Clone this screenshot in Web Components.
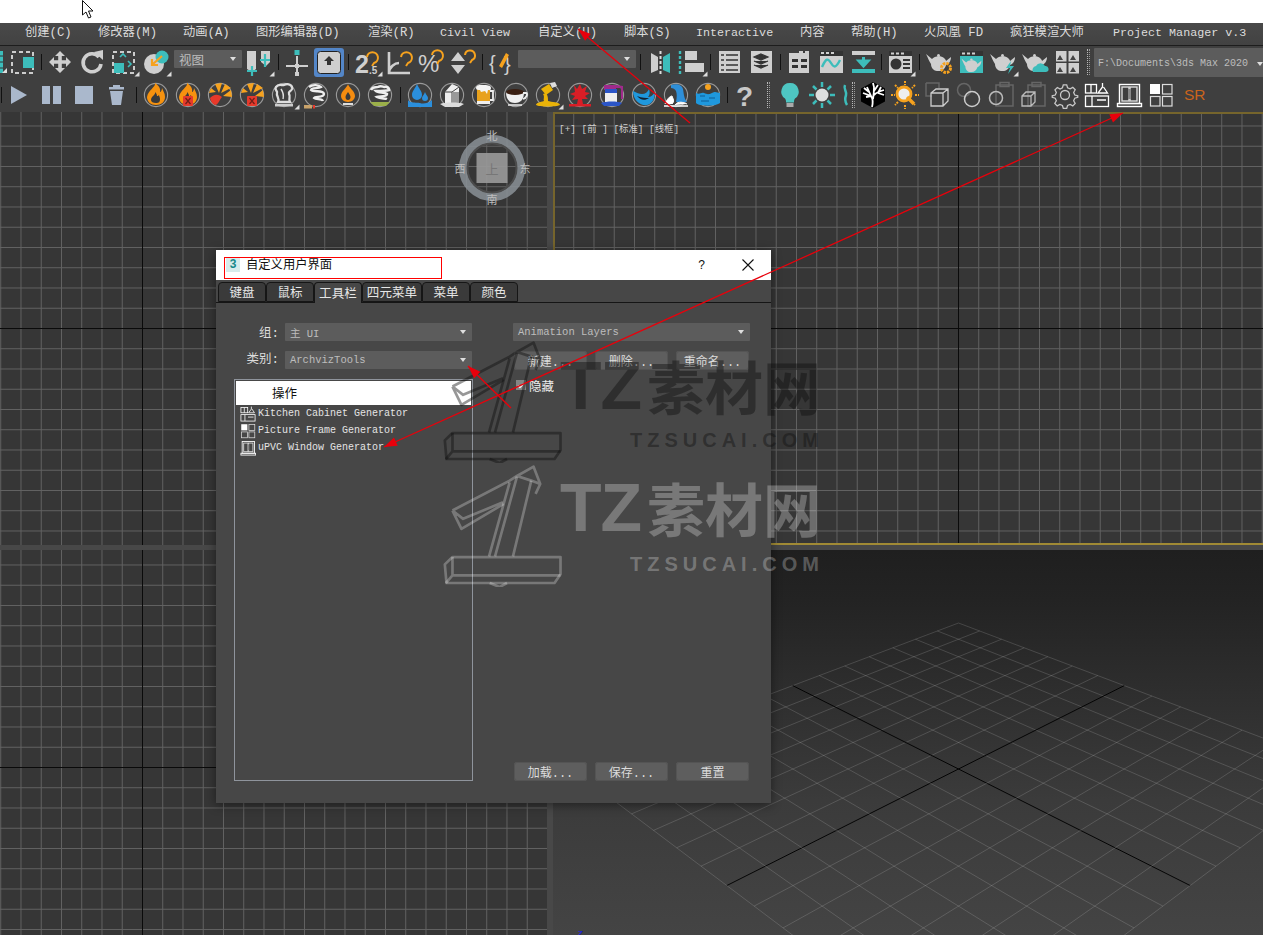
<!DOCTYPE html>
<html lang="zh"><head><meta charset="utf-8"><title>3ds Max</title>
<style>
html,body{margin:0;padding:0;width:1263px;height:935px;overflow:hidden;background:#444}
body{font-family:"Liberation Mono","Noto Sans CJK SC",monospace;color:#ddd}
</style></head><body>
<max-app>
  <title-strip></title-strip>
  <menu-bar></menu-bar>
  <tool-row>
    <tool-icon name="selcut" w="7"></tool-icon>
    <tool-icon name="sel"></tool-icon><tool-sep w="5"></tool-sep>
    <tool-icon name="move"></tool-icon><tool-icon name="rotate"></tool-icon><tool-icon name="scale" fly></tool-icon><tool-icon name="place" fly></tool-icon>
    <tool-sep w="2" blank></tool-sep><combo-box text="视图" w="68" h="18" fs="12.500" style="margin-top:4px"></combo-box><tool-sep w="1" blank></tool-sep>
    <tool-icon name="pivot" fly></tool-icon><tool-sep w="6"></tool-sep>
    <tool-icon name="axis"></tool-icon><tool-icon name="active"></tool-icon><tool-sep w="6"></tool-sep>
    <tool-icon name="snap" fly></tool-icon><tool-icon name="angle"></tool-icon><tool-icon name="percent"></tool-icon><tool-icon name="spin"></tool-icon><tool-sep w="6"></tool-sep>
    <tool-icon name="curly"></tool-icon><tool-sep w="1" blank></tool-sep><combo-box text="" w="118" h="18" style="margin-top:4px"></combo-box><tool-sep w="8"></tool-sep>
    <tool-icon name="mirror"></tool-icon><tool-icon name="align" fly></tool-icon><tool-sep w="5"></tool-sep>
    <tool-icon name="list"></tool-icon><tool-icon name="layers"></tool-icon><tool-sep w="6"></tool-sep>
    <tool-icon name="schem"></tool-icon><tool-icon name="curve"></tool-icon><tool-icon name="down"></tool-icon><tool-sep w="5"></tool-sep>
    <tool-icon name="matl" fly></tool-icon><tool-sep w="7"></tool-sep>
    <tool-icon name="potgear"></tool-icon><tool-icon name="potwin"></tool-icon><tool-icon name="potbolt" fly></tool-icon><tool-icon name="potcloud"></tool-icon><tool-icon name="pics"></tool-icon>
    <tool-sep w="11" dots></tool-sep><combo-box text="F:\Documents\3ds Max 2020" w="170" h="29" fs="10" style="margin-top:2px;padding-top:2px;padding-left:4px;padding-right:1px"></combo-box>
  </tool-row>
  <tool-row>
    <tool-sep w="3"></tool-sep>
    <tool-icon name="play"></tool-icon><tool-icon name="pause"></tool-icon><tool-sep w="1" blank></tool-sep><tool-icon name="stop"></tool-icon><tool-icon name="trash"></tool-icon><tool-sep w="8"></tool-sep>
    <tool-icon name="fire"></tool-icon><tool-icon name="firecan"></tool-icon><tool-icon name="burst"></tool-icon><tool-icon name="burstcan"></tool-icon><tool-icon name="smoke" fly></tool-icon><tool-icon name="smoke2"></tool-icon><tool-icon name="candle"></tool-icon><tool-icon name="cloud"></tool-icon><tool-sep w="8"></tool-sep>
    <tool-icon name="drop"></tool-icon><tool-icon name="milk"></tool-icon><tool-icon name="beer"></tool-icon><tool-icon name="coffee"></tool-icon><tool-icon name="paint" fly></tool-icon><tool-icon name="splash"></tool-icon><tool-icon name="bucket"></tool-icon><tool-icon name="swirl"></tool-icon><tool-icon name="fall"></tool-icon><tool-icon name="sea"></tool-icon><tool-sep w="7"></tool-sep>
    <tool-icon name="help"></tool-icon><tool-sep w="11" dots></tool-sep>
    <tool-icon name="bulb"></tool-icon><tool-icon name="sun" w="31"></tool-icon><tool-icon name="sliver" w="12"></tool-icon><tool-sep w="8" dots></tool-sep>
    <tool-icon name="tree"></tool-icon><tool-icon name="qsun"></tool-icon><tool-icon name="ghostbox"></tool-icon><tool-icon name="ghostring"></tool-icon><tool-icon name="clipring"></tool-icon><tool-icon name="clipbox"></tool-icon><tool-icon name="gear"></tool-icon><tool-icon name="kitchen"></tool-icon><tool-icon name="window"></tool-icon><tool-icon name="grid4"></tool-icon><tool-icon name="sr"></tool-icon>
  </tool-row>
  <view-ports></view-ports>
  <custom-dialog></custom-dialog>
  <water-mark style="top:340px" tone="dark"></water-mark>
  <water-mark style="top:464px" tone="light"></water-mark>
  <red-arrows></red-arrows>
</max-app>
<script>
const G='#cfcfcf',T='#3dbdbb',O='#f6a21e',B='#aab8cc',W='#fff',R='#e8392a',K='#3f3f3f';
const ring=`<circle cx="16" cy="16" r="11.600" fill="none" stroke="#9a9a9a" stroke-width="1.100"/>`;
const flame=(c='#f6920f')=>`<path d="M15 4c1 4-7 7-8 14 0 5 4 8 9 8s9-3 9-8c0-4-2-6-3-9 0 2-1 4-2 4 1-4-2-7-5-9z" fill="${c}"/><path d="M15 13c1 3-4 4-4 8 0 2 2 3 5 3s4-1 4-4c0-2-1-3-1-4-1 1-1 1-2 1 0-2-1-3-2-4z" fill="#3a3a3a"/>`;
const can=`<rect x="11" y="17" width="10" height="10" rx="1" fill="#e53a2c"/><path d="M13.500 19l5 6M18.500 19l-5 6" stroke="#702018" stroke-width="1.200"/>`;
const rays=`<path d="M15 14L11 5l7-1zM17 14l4-9 6 4zM19 17l8-6 1 7zM12 13L7 9l-2 5z" fill="${O}"/>`;
const pot=(c=G)=>`<path d="M3 8l6 5c2-3 9-4 12-1 1 1 2 2 2 3l5-4c0 4-2 7-5 8-1 4-4 6-7 6h-2c-3 0-6-3-6-7C6 15 5 12 3 8z" fill="${c}"/><circle cx="15.500" cy="9.500" r="1.500" fill="${c}"/>`;
const ICONS={
selcut:`<rect x="0" y="5" width="3" height="22" fill="${T}"/><path d="M0 10h3M0 16h3M0 22h3" stroke="#333"/><path d="M2 27l5-5v5z" fill="#ddd"/>`,
sel:`<rect x="5" y="6" width="21" height="21" fill="none" stroke="#ccc" stroke-width="2" stroke-dasharray="4 3"/><rect x="16" y="11" width="11" height="11" fill="${T}"/>`,
move:`<path d="M16 5l5 5h-3.200v4.200H22V11l5 5-5 5v-3.200h-4.200V22H21l-5 5-5-5h3.200v-4.200H10V21l-5-5 5-5v3.200h4.200V10H11z" fill="${G}"/>`,
rotate:`<path d="M23 11a9 9 0 1 0 2 7" fill="none" stroke="${G}" stroke-width="3.600"/><path d="M18 6l9-2v10z" fill="${G}"/>`,
scale:`<rect x="5" y="6" width="21" height="21" fill="none" stroke="#ccc" stroke-width="2" stroke-dasharray="4 3"/><rect x="6" y="17" width="10" height="10" fill="${T}"/><path d="M12 11l3-3 3 3M20 15l3 3-3 3" fill="none" stroke="${T}" stroke-width="1.600"/>`,
place:`<circle cx="14" cy="18" r="10" fill="${G}"/><circle cx="22" cy="11" r="6.500" fill="${T}"/><path d="M22 10l-9 8M12 13v6h6" fill="none" stroke="${O}" stroke-width="2.200"/>`,
pivot:`<path d="M4 5h9v18l-4 3-5-3zM18 5h9v11l-4 4-5-4z" fill="${G}"/><path d="M9 20v10M4 25h10M22 8v13M17 14h10" stroke="${T}" stroke-width="2.200"/>`,
axis:`<path d="M16 10v18M5 20h22" stroke="${G}" stroke-width="2"/><rect x="13.500" y="4" width="5" height="5" fill="${T}"/><rect x="14" y="18" width="4" height="4" fill="${G}"/><rect x="14" y="26" width="4" height="4" fill="${G}"/>`,
active:`<rect x="1" y="2" width="30" height="29" rx="3" fill="#5386c8"/><rect x="4.500" y="5.500" width="23" height="22" rx="3" fill="#cfcfcf" stroke="#222"/><path d="M16 10l5 5h-3v4h-4v-4h-3z" fill="#333"/>`,
snap:`<text x="4" y="27" font-family="Liberation Sans" font-weight="700" font-size="25" fill="${G}">2</text><text x="18" y="28" font-family="Liberation Sans" font-weight="700" font-size="10" fill="${G}">.5</text><path d="M16 11a5.500 5.500 0 1 1 7 6l-2 3" fill="none" stroke="${O}" stroke-width="2"/>`,
angle:`<path d="M6 6v21h21M6 27c0-6 6-10 10-10" fill="none" stroke="${G}" stroke-width="2.600"/><path d="M18 11a5.500 5.500 0 1 1 7 6l-2 3" fill="none" stroke="${O}" stroke-width="2"/>`,
percent:`<text x="3" y="26" font-family="Liberation Sans" font-size="24" fill="${G}">%</text><path d="M17 9a5.500 5.500 0 1 1 7 6l-2 3" fill="none" stroke="${O}" stroke-width="2"/>`,
spin:`<path d="M11 6l7 9H4zM4 19h14l-7 9z" fill="${G}"/><path d="M18 9a5 5 0 1 1 7 5l-2 3" fill="none" stroke="${O}" stroke-width="2"/>`,
curly:`<text x="4" y="24" font-family="Liberation Sans" font-size="20" fill="${G}">{</text><text x="19" y="25" font-family="Liberation Sans" font-size="20" fill="${G}">}</text><path d="M14 20l7-13 3 2-7 13z" fill="${O}"/>`,
mirror:`<path d="M7 7l7 4v13l-7 3z" fill="${G}"/><path d="M26 7l-7 4v13l7 3z" fill="${T}"/><path d="M16.500 5v24" stroke="#ddd" stroke-width="2" stroke-dasharray="3 2"/>`,
align:`<path d="M4 5v24" stroke="${T}" stroke-width="2.400" stroke-dasharray="3 2"/><rect x="9" y="5" width="12" height="9" fill="${G}"/><rect x="9" y="17" width="19" height="9" fill="${G}"/>`,
list:`<rect x="6" y="5" width="21" height="22" fill="${G}"/><path d="M13 9h12M8 9h3M13 14h12M8 14h3M13 19h12M8 19h3M13 24h12M8 24h3" stroke="#333" stroke-width="1.700"/>`,
layers:`<rect x="6" y="5" width="21" height="22" fill="${G}"/><path d="M16 8l7 3-7 3-7-3zM9 15l7 3 7-3M9 19l7 3 7-3" fill="#333" stroke="#333" stroke-width="1.200"/>`,
schem:`<path d="M6 7h10V5h4v2h2V5h4v22H6z" fill="${G}"/><path d="M9 13h6v3H9zM18 13h6v3h-6zM9 19h6v3H9zM18 19h6v3h-6z" fill="#333"/>`,
curve:`<rect x="5" y="5" width="23" height="22" fill="${G}"/><rect x="5" y="5" width="23" height="5" fill="#333"/><path d="M6 7h3M11 7h3M16 7h3" stroke="${G}" stroke-width="2"/><path d="M7 21c4-9 6-9 9-4s5 5 9-3" fill="none" stroke="${T}" stroke-width="2.400"/>`,
down:`<rect x="5" y="5" width="23" height="4" fill="${G}"/><rect x="5" y="23" width="23" height="4" fill="${T}"/><path d="M16.500 11v6M12 15l4.500 5 4.500-5z" stroke="${T}" stroke-width="3" fill="${T}"/>`,
matl:`<rect x="5" y="5" width="23" height="22" fill="${G}"/><rect x="5" y="5" width="23" height="5" fill="#333"/><path d="M7 7.500h3M12 7.500h3M17 7.500h3" stroke="${G}" stroke-width="2"/><circle cx="12" cy="18" r="5.500" fill="#333"/><path d="M19 14h7M19 18h7M19 22h7" stroke="#333" stroke-width="1.800"/>`,
potgear:pot()+`<circle cx="23" cy="22" r="4.500" fill="none" stroke="${O}" stroke-width="3" stroke-dasharray="2.500 1"/>`,
potwin:`<rect x="5" y="5" width="23" height="22" fill="${T}"/><rect x="5" y="5" width="23" height="5" fill="#333"/><path d="M7 7.500h3M12 7.500h3M17 7.500h3" stroke="${G}" stroke-width="2"/><g transform="translate(4 6) scale(.8)">${pot()}</g>`,
potbolt:pot()+`<path d="M24 15l-5 7h4l-2 6 6-8h-4z" fill="${T}"/>`,
potcloud:pot()+`<path d="M14 26a4 4 0 0 1 3-6 5 5 0 0 1 9 0 3 3 0 0 1 1 6z" fill="${T}"/>`,
pics:`<g fill="${G}"><rect x="5" y="5" width="10.500" height="10.500"/><rect x="17.500" y="5" width="10.500" height="10.500"/><rect x="5" y="17" width="10.500" height="10.500"/><rect x="17.500" y="17" width="10.500" height="10.500"/></g><path d="M6 14l3-5 3 5zM19 14l3-5 3 5zM6 26l3-5 3 5zM19 26l3-5 3 5z" fill="#444"/>`,
play:`<path d="M8 7l16 9-16 9z" fill="${B}"/>`,
pause:`<rect x="7" y="7" width="8" height="18" fill="${B}"/><rect x="18" y="7" width="8" height="18" fill="${B}"/>`,
stop:`<rect x="7" y="7" width="18" height="18" fill="${B}"/>`,
trash:`<path d="M10 12h13l-2 14H12z" fill="${B}"/><rect x="9" y="8" width="15" height="2.500" fill="${B}"/><rect x="13" y="6" width="7" height="2" fill="${B}"/>`,
fire:ring+flame(),
firecan:ring+flame()+can,
burst:ring+rays+`<path d="M6 19c3-3 7-5 12-1-2 2-3 6-6 8-3 0-5-3-6-7z" fill="${R}"/>`,
burstcan:ring+rays+can,
smoke:ring+`<path d="M8 8c3-4 6-1 8-2 4-2 9 0 8 4-1 3-4 2-3 5 2 3-1 5 1 8H10c2-4-2-6-1-9 1-2-3-3-1-6z" fill="none" stroke="#ddd" stroke-width="2.300"/><path d="M13 10c2 3 3 6 2 10" fill="none" stroke="#ddd" stroke-width="1.500"/><rect x="7" y="25" width="18" height="2.500" fill="#ccc"/>`,
smoke2:ring+`<path d="M9 8c4-3 10-2 12 0-3 2-9 0-10 3 3 3 12-1 13 4 0 4-9 2-10 4 2 2 8 0 9 3" fill="none" stroke="#eee" stroke-width="2.300"/><rect x="4" y="26" width="8" height="3.500" fill="#c9a36a"/><rect x="13" y="26" width="2" height="3.500" fill="${R}"/>`,
candle:ring+`<path d="M16 5c1 4 7 7 7 12 0 3-3 6-7 6s-7-3-7-6c0-5 6-8 7-12z" fill="#f58c10"/><path d="M16 13c1 2 2.500 3 2.500 5s-1 3-2.500 3-2.500-1-2.500-3 1.500-3 2.500-5z" fill="#3a3a3a"/><rect x="11" y="24" width="10" height="2" fill="#ddd"/>`,
cloud:ring+`<path d="M7 11c2-4 5-2 7-3 3-2 5 0 6 0 3-1 5 1 5 3-3 1-11 1-13 1 2 2 9 1 11 3 0 3-7 2-10 3 3 2 8 1 10 2" fill="none" stroke="#eee" stroke-width="2.500"/><path d="M6 23h20l-4 4H10z" fill="#9bb04a"/>`,
drop:ring+`<path d="M13 5c2 5 5 7 5 11a5 5 0 0 1-10 0c0-4 3-6 5-11z" fill="#2b8fdc"/><path d="M21 13c1 3 3 4 3 6a3 3 0 0 1-6 0c0-2 2-3 3-6z" fill="#2b8fdc"/><path d="M4 21c3 4 10 2 12 3s8 1 12-3v7H4z" fill="#2b8fdc"/>`,
milk:ring+`<path d="M9 13l7-8 7 3v16l-7 3-7-3z" fill="#eee"/><path d="M16 13v13M9 13h7l7-5" stroke="#444" fill="none"/><path d="M16 13h7v11l-7 3z" fill="#999"/><path d="M4 25c4-2 20-2 24 0l-5 3H9z" fill="#ddd"/>`,
beer:ring+`<rect x="9" y="9" width="13" height="16" rx="1.500" fill="#e8a11c"/><path d="M8 9c0-4 6-3 8-3s7 0 7 3-2 2-3 2l-1 4-2-3-4 1-1-2c-2 0-4 0-4-2z" fill="#f4f4f4"/><path d="M22 12h3v9h-3" fill="none" stroke="#eee" stroke-width="1.800"/><rect x="9" y="22" width="13" height="3" fill="#eee"/>`,
coffee:ring+`<path d="M6 13h18c0 7-3 11-9 11S6 20 6 13z" fill="#f0f0f0"/><ellipse cx="15" cy="13" rx="9" ry="3" fill="#3a1f12"/><path d="M23 14h3c2 0 1 5-3 6" fill="none" stroke="#eee" stroke-width="1.800"/><path d="M8 26h14" stroke="#eee" stroke-width="1.500"/>`,
paint:ring+`<path d="M9 10l8-5 4 6-7 5z" fill="#eab308"/><path d="M18 4l5-1 2 4-5 2z" fill="#ddd"/><path d="M11 15c2 3 0 5 1 7-4 1-8 2-8 4 3 2 20 2 24 0 0-3-9-3-12-4 0-3 0-5-2-8z" fill="#eab308"/>`,
splash:ring+`<path d="M10 6l3 4 3-5 2 5 5-3-2 6 5 1-5 3 3 3-6 0 1 5h-6l1-5-6 1 3-4-5-2 5-2z" fill="#d91e26"/><rect x="5" y="25" width="22" height="2.500" fill="#d91e26"/>`,
bucket:ring+`<path d="M9 10h12v13H9z" fill="#eee"/><path d="M8 6h12l7 1v13h-2V9h-5v2H8z" fill="#a02a8c"/><path d="M9 10h12v4H9z" fill="#2b55c7"/><path d="M5 24c5-2 17-2 21 0l-3 3H8z" fill="#2b55c7"/>`,
swirl:ring+`<path d="M5 12c0 10 8 15 14 14 5-1 8-6 8-13-2 3-4 5-7 5 2-2 2-5 1-8-1 3-4 5-7 5-3 0-5-1-9-3z" fill="#1f98dd"/><path d="M9 17c3 4 8 5 12 2-3 0-7 0-12-2z" fill="#123"/>`,
fall:ring+`<path d="M11 6c6-2 11 0 12 4 1 6 1 9 4 13H16c1-5 1-8 0-11-1-2-3-3-5-3z" fill="#2e8fd8"/><path d="M5 25c2-5 5-8 7-8 1 3 3 5 0 8M15 26c2-3 6-4 12-1" fill="#fff" stroke="#fff"/><path d="M4 27h24" stroke="#fff" stroke-width="1.500"/>`,
sea:ring+`<circle cx="16" cy="8" r="3" fill="${O}"/><path d="M4 14c4 2 5-1 8 0s4 2 8 0 5 0 8 0v10c-3 3-20 4-24 0z" fill="#1f98dd"/><path d="M8 17h5M17 19h6M9 22h8" stroke="#0e5d96" stroke-width="1.200"/>`,
help:`<text x="5" y="27" font-family="Liberation Sans" font-weight="700" font-size="28" fill="#c8c8c8">?</text>`,
bulb:`<path d="M16 4a8.500 8.500 0 0 0-5 15.500c1 1 1 3 1 4h8c0-1 0-3 1-4A8.500 8.500 0 0 0 16 4z" fill="#4ec6c2"/><rect x="12.500" y="24" width="7" height="4" fill="#aaa"/>`,
sun:`<circle cx="16" cy="16" r="6.500" fill="#ddd"/><path d="M16 3v5M16 24v5M3 16h5M24 16h5M7 7l3.500 3.500M21.500 21.500L25 25M25 7l-3.500 3.500M10.500 21.500L7 25" stroke="${T}" stroke-width="2.500"/>`,
sliver:`<path d="M8 6c-2 4 2 6 1 10-1 3-1 7 1 10" fill="none" stroke="${T}" stroke-width="2.500"/>`,
tree:`<path d="M16 3l12 6.500v13L16 29 4 22.500v-13z" fill="#000"/><path d="M15 28c1-4 1-8-1-11l-8-3M14 17l-5 1M14 17L10 8M12 13L7 9M16 20c1-5 1-9 1-12l-1-4M17 12l4-6M17 16c3-3 6-4 10-5M21 14l6 2M21 14l3-6" fill="none" stroke="#fff" stroke-width="1.800"/>`,
qsun:`<path d="M16 2v4M16 26v4M2 16h4M26 16h4M6 6l3 3M23 23l3 3M26 6l-3 3M9 23l-3 3" stroke="${O}" stroke-width="2" stroke-dasharray="2 1"/><circle cx="15" cy="15" r="7" fill="#eee" stroke="${O}" stroke-width="2.800"/><path d="M18 18l7 7" stroke="${O}" stroke-width="3.500"/>`,
ghostbox:`<path d="M5 4h13v5" fill="none" stroke="#666" stroke-width="1.500"/><path d="M5 4v13h6" fill="none" stroke="#666" stroke-width="1.500"/><path d="M10 14l5-4h12v12l-5 5H10zM10 14h12v13M22 14l5-4" fill="none" stroke="#ccc" stroke-width="1.300"/>`,
ghostring:`<circle cx="11" cy="11" r="6.500" fill="none" stroke="#666" stroke-width="1.500"/><circle cx="19" cy="20" r="7.500" fill="none" stroke="#ccc" stroke-width="1.500"/>`,
clipring:`<rect x="11" y="6" width="17" height="21" fill="none" stroke="#666" stroke-width="1.500"/><rect x="15" y="3.500" width="9" height="4" fill="none" stroke="#666" stroke-width="1.500"/><circle cx="11" cy="19" r="6.500" fill="none" stroke="#bbb" stroke-width="1.500"/>`,
clipbox:`<rect x="11" y="6" width="17" height="21" fill="none" stroke="#666" stroke-width="1.500"/><rect x="15" y="3.500" width="9" height="4" fill="none" stroke="#666" stroke-width="1.500"/><path d="M5 17l4-4h9v10l-4 4H5zM5 17h9v10M14 17l4-4" fill="none" stroke="#bbb" stroke-width="1.300"/>`,
gear:`<circle cx="16" cy="16" r="4.500" fill="none" stroke="#c8c8c8" stroke-width="1.300"/><path d="M14 4h4l1 3.500 3 1.300 3.200-1.800 2.800 2.800-1.800 3.200 1.300 3 3.500 1v1.800l-3.500 1-1.300 3 1.800 3.200-2.800 2.800-3.200-1.800-3 1.300-1 3.500h-4l-1-3.500-3-1.300-3.200 1.800-2.800-2.800 1.800-3.200-1.300-3-3.500-1v-1.800l3.500-1 1.300-3L4.200 10 7 7.200 10.200 9l2.800-1.500z" transform="translate(2.400 2.400) scale(.85)" fill="none" stroke="#c8c8c8" stroke-width="1.500"/>`,
kitchen:`<g fill="none" stroke="#fff" stroke-width="1.300"><rect x="4.500" y="5.500" width="11" height="8.500"/><path d="M10 5.500V14M21.500 4v4l-4.500 6h9.500L22.500 8"/><rect x="4.500" y="17" width="23" height="10.500"/><path d="M11 17v10.500M16 21h9"/></g>`,
window:`<g fill="none" stroke="#fff" stroke-width="1.400"><rect x="6.500" y="5.500" width="20" height="19"/><rect x="9" y="8" width="7" height="14" stroke="#ddd"/><rect x="17" y="8" width="7" height="14" stroke="#ddd"/><rect x="4.500" y="24.500" width="24" height="3"/></g><rect x="15" y="10" width="3" height="10" fill="#888"/>`,
grid4:`<rect x="5" y="5" width="10" height="10" fill="#fff"/><g fill="none" stroke="#ddd" stroke-width="1.200"><rect x="17.500" y="5.500" width="9.500" height="9.500"/><rect x="5.500" y="17.500" width="9.500" height="9.500"/><rect x="17.500" y="17.500" width="9.500" height="9.500"/></g>`,
sr:`<text x="7" y="21" font-family="Liberation Sans" font-size="15.500" fill="#c9641c">SR</text>`
};
function shadow(el,html){const s=el.attachShadow({mode:'open'});s.innerHTML=html;return s}
customElements.define('max-app',class extends HTMLElement{constructor(){super();shadow(this,`<style>:host{display:flex;flex-direction:column;position:relative;width:1263px;height:935px;overflow:hidden}</style><slot></slot>`)}});
customElements.define('title-strip',class extends HTMLElement{constructor(){super();shadow(this,`<style>:host{display:block;height:23px;background:#fff;position:relative}svg{position:absolute;left:81px;top:-1px}</style>
<svg width="14" height="22" viewBox="0 0 14 22"><path d="M1.500 1.500V16l3.500-3 2.500 6 2.500-1-2.500-6H12z" fill="#fff" stroke="#111"/></svg>`)}});
customElements.define('menu-bar',class extends HTMLElement{constructor(){super();
const items=[['创建(C)',73],['修改器(M)',85],['动画(A)',73],['图形编辑器(D)',112],['渲染(R)',72],['Civil View',98,1],['自定义(U)',86],['脚本(S)',72],['Interactive',104,1],['内容',51],['帮助(H)',73],['火凤凰 FD',86],['疯狂模渲大师',103],['Project Manager v.3',150,1]];
shadow(this,`<style>:host{display:flex;height:22px;box-sizing:content-box;padding-left:25px;background:linear-gradient(#494949,#424242);border-bottom:1px solid #1d1d1d;font-size:12.300px;color:#dcdcdc;white-space:nowrap}
span{flex:none;display:block;line-height:20px}.l{font-size:11.700px}</style>`+items.map(i=>`<span class="${i[2]?'l':''}" style="width:${i[1]}px">${i[0]}</span>`).join(''))}});
customElements.define('tool-row',class extends HTMLElement{constructor(){super();shadow(this,`<style>:host{display:flex;height:33px;align-items:flex-start;background:#3f3f3f;overflow:hidden}</style><slot></slot>`)}});
customElements.define('tool-icon',class extends HTMLElement{constructor(){super();
const n=this.getAttribute('name'),w=this.getAttribute('w')||32,z=this.getAttribute('size')||32;
const f=this.hasAttribute('fly')?`<path d="M26.500 30.500h5v-5z" fill="#ddd"/>`:'';
const vb=z<32?'3 3 26 26':'0 0 32 32';
shadow(this,`<style>:host{display:block;flex:none;width:${w}px;height:${z}px;overflow:hidden}svg{display:block}</style><svg width="${z}" height="${z}" viewBox="${vb}">${ICONS[n]||''}${f}</svg>`)}});
customElements.define('tool-sep',class extends HTMLElement{constructor(){super();
const w=this.getAttribute('w')||5,b=this.hasAttribute('blank'),d=this.hasAttribute('dots');
shadow(this,`<style>:host{display:flex;flex:none;width:${w}px;height:32px;justify-content:center;align-items:center}
i{display:block;width:${d?0:b?0:1}px;height:${d?26:16}px;${d?'border-left:1px dotted #bbb;border-right:1px dotted #999;width:1px':b?'':'background:#111'}}</style><i></i>`)}});
customElements.define('combo-box',class extends HTMLElement{constructor(){super();
const w=this.getAttribute('w'),h=this.getAttribute('h')||18,t=this.getAttribute('text')||'',fs=this.getAttribute('fs')||10.500;
shadow(this,`<style>:host{display:flex;flex:none;align-items:center;justify-content:space-between;box-sizing:border-box;width:${w}px;height:${h}px;background:#5c5c5c;padding:0 6px 0 5px;font-size:${fs}px;color:#bdbdbd;white-space:pre;border-radius:1px}
i{width:0;height:0;border:3.500px solid transparent;border-top:4.500px solid #dedede;border-bottom:0}</style><span>${t}</span><i></i>`)}});
customElements.define('ui-button',class extends HTMLElement{constructor(){super();shadow(this,`<style>:host{display:flex;flex:none;width:73px;height:19px;box-sizing:border-box;align-items:center;justify-content:center;background:#5e5e5e;border-radius:3px;font-size:12px;color:#dcdcdc;box-shadow:0 0 0 1px #545454 inset}</style><slot></slot>`)}});
customElements.define('dlg-tab',class extends HTMLElement{constructor(){super();const a=this.hasAttribute('active');shadow(this,`<style>:host{display:flex;flex:none;box-sizing:border-box;width:${this.getAttribute('w')}px;height:${a?21:20}px;align-items:center;justify-content:center;margin-bottom:${a?-1:0}px;padding-bottom:2px;
border:1px solid #161616;border-bottom:${a?0:1}px solid #161616;border-radius:4px 4px 0 0;background:${a?'#474747':'#3a3a3a'};font-size:12.500px;color:#e6e6e6;letter-spacing:.1px}</style><slot></slot>`)}});
customElements.define('list-row',class extends HTMLElement{constructor(){super();shadow(this,`<style>:host{display:flex;height:17px;align-items:center;font-size:10px;color:#e4e4e4;padding-left:4px;white-space:pre}::slotted(tool-icon){margin-right:2px}</style><slot></slot>`)}});
customElements.define('custom-dialog',class extends HTMLElement{constructor(){super();
shadow(this,`<style>:host{position:absolute;left:216px;top:250px;width:555px;height:553px;background:#474747;display:flex;flex-direction:column;box-shadow:0 2px 10px rgba(0,0,0,.45);font-size:12px}
.title{flex:none;height:30px;background:#fff;display:flex;align-items:flex-start;color:#111}
.caption{margin:7px 0 0 8px;box-sizing:border-box;width:218px;height:22px;border:1px solid #f00;display:flex;align-items:flex-start;gap:5px;padding-left:1px;font-size:12.300px}
.logo{width:14px;height:14px;background:#d7ecec;color:#16888a;font:700 12px "Liberation Sans";text-align:center;line-height:13px}
.caption span{line-height:13px;margin:2px 0 0 1px}
.btns{margin-left:auto;display:flex;align-items:center;gap:37px;padding:8px 17px 0 0}
.q{font:400 12px "Liberation Sans"}
.tabs{flex:none;display:flex;align-items:flex-end;padding-left:2px;border-bottom:1px solid #151515;height:22px}
.body{flex:1;display:flex;min-height:0;padding:20px 21px 22px 18px}
.left{flex:none;width:239px;display:flex;flex-direction:column}
.row{display:flex;align-items:center;height:18px;margin-bottom:10px;color:#dcdcdc}
.row label{flex:none;width:51px;box-sizing:border-box;padding:0 6px 2px 0;text-align:right;font-size:12.500px}
.row.up label{padding-bottom:6px}
.list{flex:1;box-sizing:border-box;border:1px solid #8f949c;padding:1px}
.head{height:24px;background:#fff;color:#111;display:flex;align-items:center;padding-left:36px;font-size:12.500px;padding-bottom:2px;box-sizing:border-box}
.right{flex:none;width:237px;margin-left:40px;display:flex;flex-direction:column}
.btnrow{display:flex;gap:8px;padding-left:1px}
.check{display:flex;align-items:center;gap:3px;margin:9px 0 0 3px;color:#eee;font-size:12.500px;height:12px}
.box{width:10px;height:10px;background:#858585;display:block}
.foot{margin-top:auto}
</style>
<div class="title"><div class="caption"><div class="logo">3</div><span>自定义用户界面</span></div><div class="btns"><span class="q">?</span><svg width="12" height="12" viewBox="0 0 12 12"><path d="M.5.5l11 11M11.500.5l-11 11" stroke="#111" stroke-width="1.100"/></svg></div></div>
<div class="tabs"><dlg-tab w="48">键盘</dlg-tab><dlg-tab w="48">鼠标</dlg-tab><dlg-tab w="48" active>工具栏</dlg-tab><dlg-tab w="60">四元菜单</dlg-tab><dlg-tab w="48">菜单</dlg-tab><dlg-tab w="48">颜色</dlg-tab></div>
<div class="body"><div class="left">
<div class="row"><label>组:</label><combo-box w="187" text="主 UI"></combo-box></div>
<div class="row up"><label>类别:</label><combo-box w="187" text="ArchvizTools"></combo-box></div>
<div class="list"><div class="head">操作</div>
<list-row><tool-icon name="kitchen" size="16" w="16"></tool-icon>Kitchen Cabinet Generator</list-row>
<list-row><tool-icon name="grid4" size="16" w="16"></tool-icon>Picture Frame Generator</list-row>
<list-row><tool-icon name="window" size="16" w="16"></tool-icon>uPVC Window Generator</list-row>
</div></div>
<div class="right"><combo-box w="237" text="Animation Layers" style="margin-bottom:10px"></combo-box>
<div class="btnrow"><ui-button>新建...</ui-button><ui-button>删除...</ui-button><ui-button>重命名...</ui-button></div>
<div class="check"><svg class="box" viewBox="0 0 10 10"><path d="M2 5.500l2 2 4-4" fill="none" stroke="#eee" stroke-width="1.500"/></svg><span>隐藏</span></div>
<div class="btnrow foot"><ui-button>加载...</ui-button><ui-button>保存...</ui-button><ui-button>重置</ui-button></div>
</div></div>`)}});
customElements.define('view-ports',class extends HTMLElement{constructor(){super();
const gc='#626262';
const grid=(ax,ay,gx=ax,gy=ay)=>`background-color:#363636;background-image:linear-gradient(#0a0a0a,#0a0a0a),linear-gradient(#0a0a0a,#0a0a0a),linear-gradient(to right,${gc} 1px,transparent 1px),linear-gradient(${gc} 1px,transparent 1px);background-size:1px 100%,100% 1px,20.25px 20.25px,20.25px 20.25px;background-repeat:no-repeat,no-repeat,repeat,repeat;background-position:${ax}px 0,0 ${ay}px,${gx%20.25}px 0,0 ${gy%20.25}px;`;
const n=14,Bk=[958.5,623],Rr=[1345,769],F=[958.5,1060],L=[572,769];
function hom(){const[x0,y0]=Bk,[x1,y1]=Rr,[x2,y2]=F,[x3,y3]=L;const dx1=x1-x2,dx2=x3-x2,sx=x0-x1+x2-x3,dy1=y1-y2,dy2=y3-y2,sy=y0-y1+y2-y3,d=dx1*dy2-dx2*dy1,g=(sx*dy2-dx2*sy)/d,h=(dx1*sy-sx*dy1)/d,a=x1-x0+g*x1,b=x3-x0+h*x3,c=x0,e=y1-y0+g*y1,f=y3-y0+h*y3,i=y0;return(u,v)=>{const w=g*u+h*v+1;return[(a*u+b*v+c)/w-553,(e*u+f*v+i)/w-550]}}
const H=hom();let ln='';
for(let k=0;k<=n;k++){const t=k/n,[a,b]=H(t,0),[c,d]=H(t,1),[e,f]=H(0,t),[g,h]=H(1,t);const s=k===n/2?'#050505':'rgba(255,255,255,.15)';
ln+=`<line x1="${a}" y1="${b}" x2="${c}" y2="${d}" stroke="${s}"/><line x1="${e}" y1="${f}" x2="${g}" y2="${h}" stroke="${s}"/>`}
shadow(this,`<style>:host{display:grid;flex:1;min-height:0;grid-template-columns:547px 6px 710px;grid-template-rows:433px 5px 385px;background:#484848}
section{position:relative;overflow:hidden}
.tr{box-sizing:border-box;border:2px solid #76652c;border-bottom-color:#a08a35;border-right:0}
.lab{position:absolute;left:4px;top:7px;font-size:9.400px;color:#cfcfcf;white-space:pre}
.pv{background:linear-gradient(#1f1f1f 0,#232323 13%,#3b3b3b 65%,#444 100%);grid-column:3}
.pv svg{position:absolute;inset:0}
.z{position:absolute;left:25px;bottom:-3px;color:#1d22d6;font:700 8px/8px "Liberation Sans"}
</style>
<section style="${grid(142,216)}"><svg width="80" height="80" viewBox="0 0 80 80" style="position:absolute;left:452px;top:16px"><circle cx="40" cy="40" r="29" fill="none" stroke="#8a9096" stroke-opacity=".85" stroke-width="8"/><circle cx="40" cy="40" r="24.500" fill="none" stroke="#4c4c4c" stroke-width="2"/><rect x="24.500" y="25" width="31" height="30" fill="#9a9a9a" fill-opacity=".9"/><g font-family="Noto Sans CJK SC" font-size="11" fill="#bdbdbd" text-anchor="middle"><text x="40" y="46" fill="#777" font-size="13">上</text><text x="40" y="12">北</text><text x="40" y="76">南</text><text x="8" y="45">西</text><text x="73" y="45">东</text></g></svg></section>
<div></div>
<section class="tr" style="${grid(403,214)}"><div class="lab">[+] [前 ] [标准] [线框]</div></section>
<div style="grid-column:1/4"></div>
<section style="${grid(142,217)}"></section>
<div></div>
<section class="pv"><svg width="710" height="385">${ln}</svg><div class="z">Z</div></section>`)}});
const logo=c=>`<svg width="120" height="123" viewBox="40 10 360 370" fill="none" stroke="${c}" stroke-width="8" stroke-linejoin="round"><path d="M45 312L68 290H393V342L375 368H50Z"/><path d="M68 290V345L48 368M68 345H393"/><path d="M178 288L240 65M196 288L262 48M250 288L305 60"/><path d="M68 150L240 60 262 46 312 18 332 70 318 100M68 150L95 205 222 130M68 150L100 175 220 125M262 46L305 60 332 70"/><path d="M180 368L210 380 232 368"/></svg>`;
customElements.define('water-mark',class extends HTMLElement{constructor(){super();
const dark=this.getAttribute('tone')==='dark';
const c=dark?'rgba(15,15,15,.43)':'rgba(255,255,255,.27)';
shadow(this,`<style>:host{position:absolute;left:443px;display:flex;width:400px;color:${c};pointer-events:none;font-family:"Noto Sans CJK SC",sans-serif;font-weight:700;white-space:nowrap}
.t{margin-left:-3px;padding-top:${dark?15:13}px}.a{height:60px;line-height:60px;font-size:58px;display:flex;align-items:center}.a b{font:700 68px "Liberation Sans";width:87px;letter-spacing:-1px}
.b{font:700 20px "Liberation Sans";letter-spacing:5px;margin:${dark?13:15}px 0 0 70px;line-height:24px}</style>
${logo(c)}<div class="t"><div class="a"><b>TZ</b>素材网</div><div class="b">TZSUCAI.COM</div></div>`)}});
customElements.define('red-arrows',class extends HTMLElement{constructor(){super();
const C='#e8000b';
const tip=(x,y,fx,fy)=>{const a=Math.atan2(y-fy,x-fx),l=13,w=4.500,bx=x-l*Math.cos(a),by=y-l*Math.sin(a),nx=-Math.sin(a)*w,ny=Math.cos(a)*w;return `<path d="M${x} ${y}L${bx+nx} ${by+ny}L${bx-nx} ${by-ny}Z" fill="${C}"/>`};
shadow(this,`<style>:host{position:absolute;inset:0;pointer-events:none}svg{display:block}</style><svg width="1263" height="935"><g stroke="${C}" stroke-width="1.300"><line x1="690" y1="123" x2="578" y2="29"/><line x1="384" y1="447" x2="1123" y2="113"/><line x1="511" y1="408" x2="468" y2="366"/></g>${tip(578,29,690,123)}${tip(384,447,1123,113)}${tip(1123,113,384,447)}${tip(468,366,511,408)}</svg>`)}});
</script>
</body></html>
